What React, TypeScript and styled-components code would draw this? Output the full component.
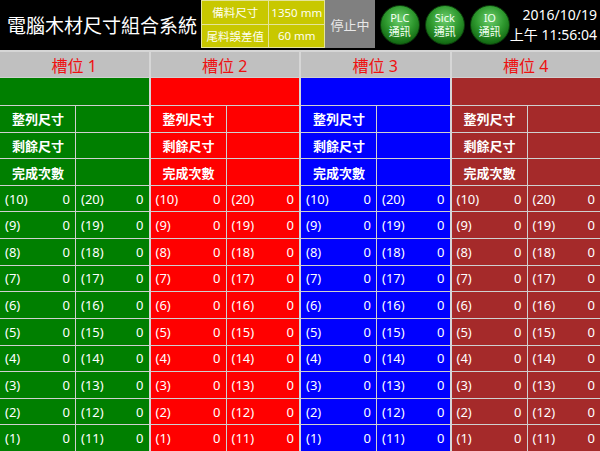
import React from "react";
import styled, { createGlobalStyle } from "styled-components";

const GlobalStyle = createGlobalStyle`
  html, body {
    margin: 0;
    padding: 0;
    background: #000;
  }
  * {
    box-sizing: border-box;
  }
`;

const CJK = `"Noto Sans", "Noto Sans CJK TC", sans-serif`;

interface Slot {
  name: string;
  color: string;
}

const slots: Slot[] = [
  { name: "槽位 1", color: "#007f00" },
  { name: "槽位 2", color: "#ff0000" },
  { name: "槽位 3", color: "#0000ff" },
  { name: "槽位 4", color: "#a52a2a" },
];

const labels = ["整列尺寸", "剩餘尺寸", "完成次數"];
const counters = [10, 9, 8, 7, 6, 5, 4, 3, 2, 1];

export default function App() {
  return (
    <UIScreen>
      <GlobalStyle />
      <UIHeader>
        <UITitle>電腦木材尺寸組合系統</UITitle>
        <UISpec>
          <UISpecCell>備料尺寸</UISpecCell>
          <UISpecCell $value>1350 mm</UISpecCell>
          <UISpecCell>尾料誤差值</UISpecCell>
          <UISpecCell $value>60 mm</UISpecCell>
        </UISpec>
        <UIStatus>停止中</UIStatus>
        <UILamps>
          <UILamp>
            <span>PLC</span>
            <span>通訊</span>
          </UILamp>
          <UILamp>
            <span>Sick</span>
            <span>通訊</span>
          </UILamp>
          <UILamp>
            <span>IO</span>
            <span>通訊</span>
          </UILamp>
        </UILamps>
        <UIClock>
          <span>2016/10/19</span>
          <span>上午 11:56:04</span>
        </UIClock>
      </UIHeader>

      <UIBoard>
        {slots.map((slot) => (
          <UISlot key={slot.name}>
            <UISlotTitle>{slot.name}</UISlotTitle>
            <UIBlank $color={slot.color} />
            {labels.map((label) => (
              <UIRow key={label}>
                <UILabelCell $color={slot.color}>{label}</UILabelCell>
                <UIDataCell $color={slot.color} />
              </UIRow>
            ))}
            {counters.map((n) => (
              <UIRow key={n}>
                <UIDataCell $color={slot.color}>
                  <span>({n})</span>
                  <span>0</span>
                </UIDataCell>
                <UIDataCell $color={slot.color}>
                  <span>({n + 10})</span>
                  <span>0</span>
                </UIDataCell>
              </UIRow>
            ))}
          </UISlot>
        ))}
      </UIBoard>
    </UIScreen>
  );
}

const UIScreen = styled.div`
  width: 600px;
  height: 451px;
  overflow: hidden;
  display: flex;
  flex-direction: column;
  background: #000;
  font-family: ${CJK};
`;

const UIHeader = styled.div`
  height: 50px;
  flex-shrink: 0;
  display: flex;
  align-items: flex-start;
  background: #000;
  color: #fff;
`;

const UITitle = styled.div`
  width: 203px;
  height: 50px;
  padding-left: 7px;
  display: flex;
  align-items: center;
  font-size: 19px;
  white-space: nowrap;
`;

const UISpec = styled.div`
  width: 125px;
  height: 48px;
  display: grid;
  grid-template-columns: 66px 1fr;
  grid-template-rows: 1fr 1fr;
  gap: 1px;
  background: #e4e49a;
  border: 1px solid #e4e49a;
`;

const UISpecCell = styled.div<{ $value?: boolean }>`
  background: #c8c800;
  display: flex;
  align-items: center;
  justify-content: center;
  font-size: 11.5px;
  color: #fffff0;
  white-space: nowrap;
`;

const UIStatus = styled.div`
  width: 50px;
  height: 48px;
  background: #808080;
  color: #e8e8e8;
  font-size: 13px;
  display: flex;
  align-items: center;
  justify-content: center;
`;

const UILamps = styled.div`
  display: flex;
  gap: 5px;
  padding: 5px 0 0 5px;
`;

const UILamp = styled.div`
  width: 40px;
  height: 40px;
  border-radius: 50%;
  background: radial-gradient(circle at 50% 35%, #6fcf6f 0%, #2f9a2f 45%, #116611 80%, #0a4a0a 100%);
  border: 1px solid #0b3d0b;
  display: flex;
  flex-direction: column;
  align-items: center;
  justify-content: center;
  color: #f4fff4;
  font-size: 11px;
  line-height: 14px;
`;

const UIClock = styled.div`
  flex: 1;
  height: 50px;
  padding-right: 3px;
  display: flex;
  flex-direction: column;
  align-items: flex-end;
  justify-content: center;
  font-size: 14px;
  line-height: 20px;
  color: #fff;
  white-space: nowrap;
`;

const UIBoard = styled.div`
  flex: 1;
  display: grid;
  grid-template-columns: repeat(4, 1fr);
  gap: 2px;
  padding-top: 2px;
  background: #d6d6d6;
`;

const UISlot = styled.div`
  display: grid;
  grid-template-rows: 25px 27px repeat(13, 1fr);
  gap: 1px;
  background: #d0d0d0;
`;

const UISlotTitle = styled.div`
  background: #c0c0c0;
  color: #ee1111;
  font-size: 16px;
  display: flex;
  align-items: center;
  justify-content: center;
`;

const UIBlank = styled.div<{ $color: string }>`
  background: ${(p) => p.$color};
`;

const UIRow = styled.div`
  display: grid;
  grid-template-columns: 75px 1fr;
  gap: 1px;
`;

const UILabelCell = styled.div<{ $color: string }>`
  background: ${(p) => p.$color};
  color: #fff;
  font-size: 13px;
  font-weight: 700;
  padding-left: 12px;
  display: flex;
  align-items: center;
`;

const UIDataCell = styled.div<{ $color: string }>`
  background: ${(p) => p.$color};
  color: #fff;
  font-size: 13px;
  padding: 0 5px 0 5px;
  display: flex;
  align-items: center;
  justify-content: space-between;
`;
